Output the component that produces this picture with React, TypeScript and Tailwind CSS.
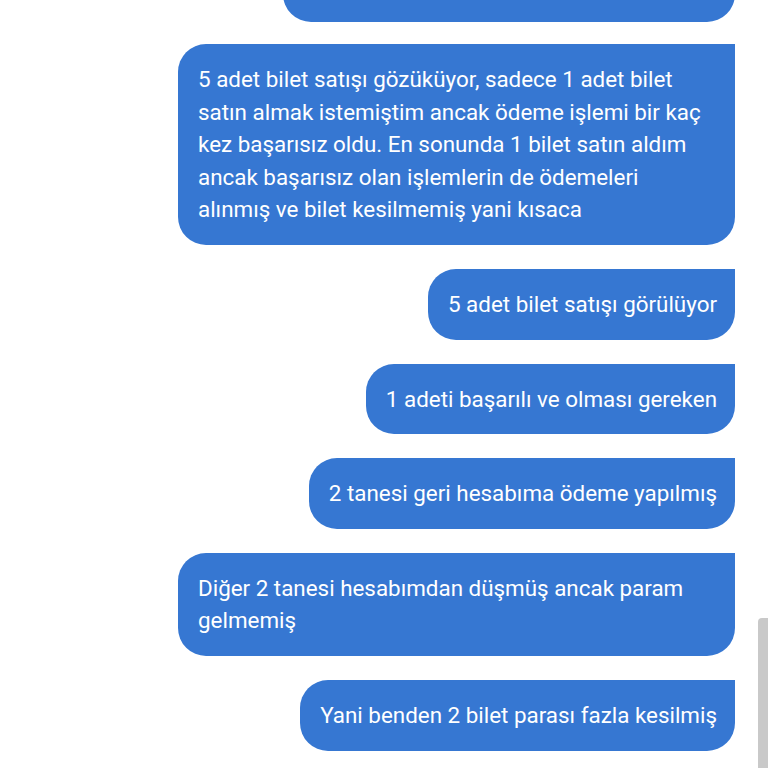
import React from 'react';

type Msg = { text: string; wide?: boolean };

const messages: Msg[] = [
  {
    text: '5 adet bilet satışı gözüküyor, sadece 1 adet bilet satın almak istemiştim ancak ödeme işlemi bir kaç kez başarısız oldu. En sonunda 1 bilet satın aldım ancak başarısız olan işlemlerin de ödemeleri alınmış ve bilet kesilmemiş yani kısaca',
    wide: true,
  },
  { text: '5 adet bilet satışı görülüyor' },
  { text: '1 adeti başarılı ve olması gereken' },
  { text: '2 tanesi geri hesabıma ödeme yapılmış' },
  { text: 'Diğer 2 tanesi hesabımdan düşmüş ancak param gelmemiş', wide: true },
  { text: 'Yani benden 2 bilet parası fazla kesilmiş' },
];

function Bubble({ text, wide }: Msg) {
  return (
    <div
      className={
        'max-w-[557px] bg-[#3677d2] text-white rounded-[28px] rounded-tr-none pl-5 pr-[18px] py-[19px] text-[22.4px] leading-[32.6px] ' +
        (wide ? 'w-[557px]' : '')
      }
    >
      <p className="max-w-[512px]">{text}</p>
    </div>
  );
}

export default function App() {
  return (
    <div
      className="relative w-[768px] h-[768px] overflow-hidden bg-white"
      style={{ fontFamily: 'Roboto, "Noto Sans", sans-serif' }}
    >
      <div className="flex flex-col items-end gap-[24px] pr-[33px]">
        {/* bubble cut off by the top of the screen */}
        <div className="w-[452px] h-[70px] -mt-[48px] -mb-[2px] bg-[#3677d2] rounded-[28px] rounded-tr-none" />
        {messages.map((m, i) => (
          <Bubble key={i} text={m.text} wide={m.wide} />
        ))}
      </div>
      <div className="absolute right-0 top-[618px] w-[10px] h-[160px] bg-[#c9c9c9] rounded-tl-[4px]" />
    </div>
  );
}
